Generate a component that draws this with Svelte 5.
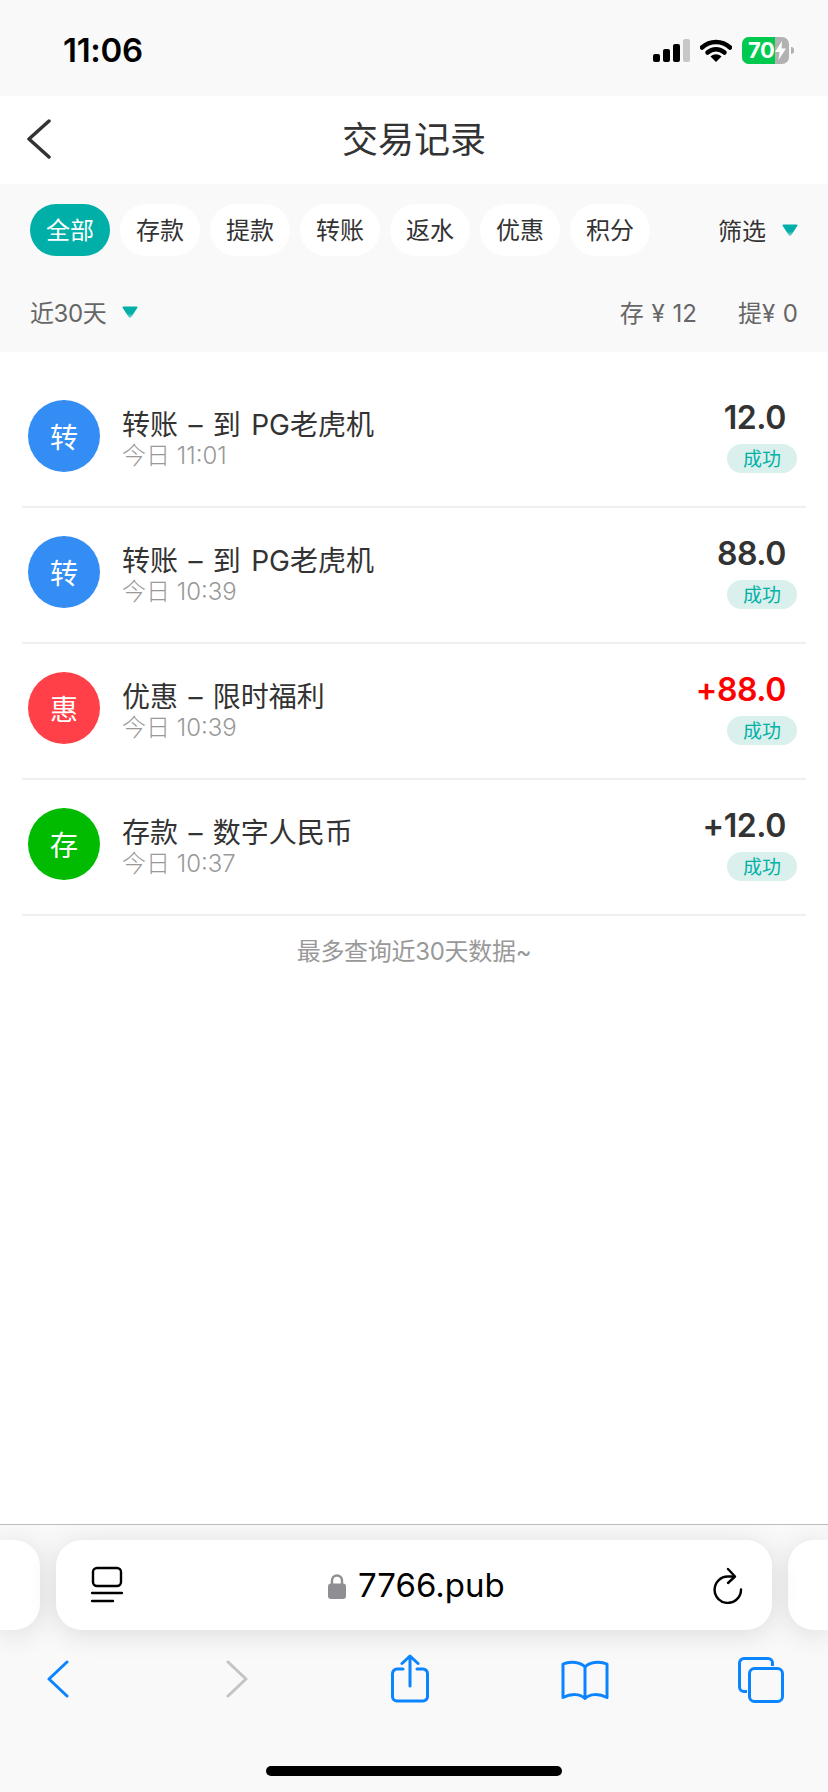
<script>
  const tabs = ['全部', '存款', '提款', '转账', '返水', '优惠', '积分'];
  const rows = [
    { mark: '转', tone: 'blue', title: '转账 – 到 PG老虎机', time: '今日 11:01', amount: '12.0', red: false },
    { mark: '转', tone: 'blue', title: '转账 – 到 PG老虎机', time: '今日 10:39', amount: '88.0', red: false },
    { mark: '惠', tone: 'red', title: '优惠 – 限时福利', time: '今日 10:39', amount: '+88.0', red: true },
    { mark: '存', tone: 'green', title: '存款 – 数字人民币', time: '今日 10:37', amount: '+12.0', red: false }
  ];
</script>

{#snippet tri()}
  <svg class="tri" width="16" height="12" viewBox="0 0 16 12">
    <defs>
      <linearGradient id="tri-fade" x1="0" y1="0" x2="0" y2="1">
        <stop offset="0" stop-color="#00b0a8" />
        <stop offset="0.6" stop-color="#00b0a8" />
        <stop offset="1" stop-color="#7fd6d1" />
      </linearGradient>
    </defs>
    <path d="M1.500 0.500H14.500Q16 0.500 15.200 2L9.200 11.200Q8 12.500 6.800 11.200L0.800 2Q0 0.500 1.500 0.500Z" fill="url(#tri-fade)" />
  </svg>
{/snippet}

<div class="page">
  <div class="status">
    <span class="clock">11:06</span>
    <div class="status-icons">
      <svg class="signal" width="37" height="23" viewBox="0 0 37 23">
        <rect x="0" y="15" width="7" height="8" rx="2" fill="#000" />
        <rect x="10" y="10" width="7" height="13" rx="2" fill="#000" />
        <rect x="20" y="5" width="7" height="18" rx="2" fill="#000" />
        <rect x="30" y="0" width="7" height="23" rx="2" fill="#c8c8c8" />
      </svg>
      <svg class="wifi" width="32" height="23" viewBox="0 0 32 23">
        <path d="M2 8.500C10 1 22 1 30 8.500" fill="none" stroke="#000" stroke-width="4.500" stroke-linecap="round" />
        <path d="M7.500 13.500C12.500 9 19.500 9 24.500 13.500" fill="none" stroke="#000" stroke-width="4.500" stroke-linecap="round" />
        <path d="M10.500 17.500C14 14.600 18 14.600 21.500 17.500L16 23Z" fill="#000" />
      </svg>
      <div class="battery">
        <span class="battery-fill"></span>
        <span class="battery-text">70</span>
        <svg class="bolt" width="11" height="19" viewBox="0 0 11 19"><path d="M7 0L0 11H4.500L3.500 19L11 7.500H6.500Z" fill="#fff" /></svg>
      </div>
      <span class="nub"></span>
    </div>
  </div>

  <header class="nav">
    <svg class="back" width="26" height="40" viewBox="0 0 26 40">
      <path d="M23 2L3 20L23 38" fill="none" stroke="#333" stroke-width="3.500" stroke-linecap="round" stroke-linejoin="round" />
    </svg>
    <h1>交易记录</h1>
  </header>

  <section class="filters">
    <div class="tab-row">
      <div class="tabs">
        {#each tabs as tab, i}
          <span class="tab" class:active={i === 0}><span class="lift">{tab}</span></span>
        {/each}
      </div>
      <span class="picker picker-strong"><span class="lift">筛选</span>{@render tri()}</span>
    </div>
    <div class="sum-row">
      <span class="picker"><span class="lift tight">近30天</span>{@render tri()}</span>
      <div class="sums">
        <span class="lift">存 ¥ 12</span>
        <span class="lift">提¥ 0</span>
      </div>
    </div>
  </section>

  <main class="list">
    {#each rows as row}
      <article class="row">
        <span class="mark {row.tone}">{row.mark}</span>
        <div class="info">
          <div class="title">{row.title}</div>
          <div class="time">{row.time}</div>
        </div>
        <div class="money">
          <div class="amount" class:loss={row.red}>{row.amount}</div>
          <span class="badge"><span class="lift">成功</span></span>
        </div>
      </article>
    {/each}
    <p class="note">最多查询近30天数据~</p>
  </main>

  <footer class="toolbar">
    <div class="url-row">
      <div class="side left"></div>
      <div class="url">
        <svg class="tabs-icon" width="32" height="38" viewBox="0 0 32 38">
          <rect x="2" y="2" width="28" height="18" rx="4" fill="none" stroke="#000" stroke-width="2.400" />
          <path d="M1 27H31M1 35H22" stroke="#000" stroke-width="2.400" stroke-linecap="round" />
        </svg>
        <div class="address">
          <svg width="18" height="26" viewBox="0 0 18 26">
            <path d="M4 12V7.500a5 5 0 0 1 10 0V12" fill="none" stroke="#8e8e93" stroke-width="2.400" />
            <rect x="0" y="10.500" width="18" height="15.500" rx="3" fill="#8e8e93" />
          </svg>
          <span>7766.pub</span>
        </div>
        <svg class="reload" width="30" height="37" viewBox="0 0 30 37">
          <path d="M28 22.500A13.200 13.200 0 1 1 15 9.500H20" fill="none" stroke="#000" stroke-width="2.400" stroke-linecap="round" />
          <path d="M15 2L22 9.500L15 16" fill="none" stroke="#000" stroke-width="2.400" stroke-linecap="round" stroke-linejoin="round" />
        </svg>
      </div>
      <div class="side right"></div>
    </div>
    <nav class="actions">
      <svg width="22" height="38" viewBox="0 0 22 38" class="a-back"><path d="M20 2L2 19L20 36" fill="none" stroke="#0a84ff" stroke-width="3" stroke-linecap="round" stroke-linejoin="round" /></svg>
      <svg width="22" height="38" viewBox="0 0 22 38" class="a-forward"><path d="M2 2L20 19L2 36" fill="none" stroke="#c4c4c4" stroke-width="3" stroke-linecap="round" stroke-linejoin="round" /></svg>
      <svg width="38" height="49" viewBox="0 0 38 49" class="a-share">
        <path d="M12 15H6a4.500 4.500 0 0 0-4.500 4.500v23A4.500 4.500 0 0 0 6 47h26a4.500 4.500 0 0 0 4.500-4.500v-23A4.500 4.500 0 0 0 32 15h-6" fill="none" stroke="#0a84ff" stroke-width="3" stroke-linecap="round" />
        <path d="M19 32V2M11 9.500L19 2L27 9.500" fill="none" stroke="#0a84ff" stroke-width="3" stroke-linecap="round" stroke-linejoin="round" />
      </svg>
      <svg width="48" height="40" viewBox="0 0 48 40" class="a-book">
        <path d="M24 7C20 2.500 10 0.500 2 4V37.500C10 33.500 19 33.500 24 38.500C29 33.500 38 33.500 46 37.500V4C38 0.500 28 2.500 24 7ZM24 7V37" fill="none" stroke="#0a84ff" stroke-width="3" stroke-linecap="round" stroke-linejoin="round" />
      </svg>
      <svg width="46" height="46" viewBox="0 0 46 46" class="a-tabs">
        <path d="M9 34.500H6a4.500 4.500 0 0 1-4.500-4.500V6A4.500 4.500 0 0 1 6 1.500h24A4.500 4.500 0 0 1 34.500 6v3" fill="none" stroke="#0a84ff" stroke-width="3" />
        <rect x="11.500" y="11.500" width="33" height="33" rx="5" fill="none" stroke="#0a84ff" stroke-width="3" />
      </svg>
    </nav>
    <div class="home"></div>
  </footer>
</div>

<style>
  :global(body) {
    margin: 0;
    background: #fff;
  }

  .page {
    width: 828px;
    height: 1792px;
    display: flex;
    flex-direction: column;
    overflow: hidden;
    font-family: Inter, "Noto Sans CJK SC", "Liberation Sans", sans-serif;
    color: #333;
  }

  .lift {
    display: block;
    margin-top: -4px;
  }

  .tight {
    letter-spacing: -0.4px;
  }

  .status {
    height: 96px;
    flex: none;
    background: #f9f9f9;
    display: flex;
    justify-content: space-between;
    align-items: center;
    padding: 0 34px 0 63px;
    box-sizing: border-box;
  }

  .clock {
    font-size: 33px;
    font-weight: 600;
    color: #000;
    line-height: 1;
    margin-top: 4px;
    letter-spacing: -0.3px;
  }

  .status-icons {
    display: flex;
    align-items: center;
    margin-top: 4px;
  }

  .wifi {
    margin-left: 10px;
  }

  .battery {
    position: relative;
    width: 47px;
    height: 27px;
    margin-left: 10px;
    border-radius: 7px;
    background: #b2b2b2;
    overflow: hidden;
    display: flex;
    align-items: center;
  }

  .battery-fill {
    position: absolute;
    left: 0;
    top: 0;
    bottom: 0;
    width: 33px;
    background: #00c94f;
  }

  .battery-text {
    position: relative;
    margin-left: 6px;
    width: 27px;
    flex: none;
    font-size: 22px;
    line-height: 27px;
    font-weight: 700;
    color: #fff;
    letter-spacing: -0.5px;
  }

  .bolt {
    position: relative;
    flex: none;
  }

  .nub {
    width: 3px;
    height: 7px;
    margin-left: 2px;
    border-radius: 0 3px 3px 0;
    background: #b2b2b2;
  }

  .nav {
    height: 88px;
    flex: none;
    background: #fff;
    position: relative;
    display: flex;
    align-items: center;
    justify-content: center;
  }

  .nav h1 {
    margin: 0;
    font-size: 36px;
    font-weight: 400;
    line-height: 1;
    color: #333;
  }

  .back {
    position: absolute;
    left: 26px;
    top: 23px;
  }

  .filters {
    height: 168px;
    flex: none;
    box-sizing: border-box;
    background: #f9f9f9;
    padding: 20px 30px 0;
  }

  .tab-row,
  .sum-row {
    display: flex;
    align-items: center;
    justify-content: space-between;
  }

  .tab-row {
    height: 52px;
  }

  .sum-row {
    height: 36px;
    margin-top: 39px;
  }

  .tabs {
    display: flex;
    gap: 10px;
  }

  .tab {
    width: 80px;
    height: 52px;
    border-radius: 26px;
    background: #fff;
    display: flex;
    align-items: center;
    justify-content: center;
    font-size: 24px;
    color: #333;
  }

  .tab.active {
    background: #00b0a8;
    color: #fff;
  }

  .picker {
    display: flex;
    align-items: center;
    font-size: 24px;
    color: #666;
  }

  .picker-strong {
    color: #333;
    margin-top: 2px;
  }

  .tri {
    margin-left: 16px;
    margin-top: -2px;
  }

  .sums {
    display: flex;
    gap: 41px;
    font-size: 24px;
    color: #666;
    word-spacing: 1px;
  }

  .list {
    flex: 1;
    background: #fff;
    padding: 20px 22px 0;
  }

  .row {
    height: 136px;
    box-sizing: border-box;
    padding: 28px 9px 0 6px;
    border-bottom: 2px solid #f0f0f0;
    display: flex;
    align-items: flex-start;
  }

  .mark {
    width: 72px;
    height: 72px;
    flex: none;
    border-radius: 50%;
    display: flex;
    align-items: center;
    justify-content: center;
    font-size: 28px;
    color: #fff;
  }

  .blue {
    background: #338df5;
  }

  .red {
    background: #ff4048;
  }

  .green {
    background: #00bb00;
  }

  .info {
    flex: 1;
    margin-left: 22px;
  }

  .title {
    font-size: 28px;
    line-height: 36px;
    margin-top: 7px;
    word-spacing: 2.5px;
    color: #333;
  }

  .time {
    font-size: 24px;
    line-height: 28px;
    margin-top: -1px;
    font-weight: 300;
    color: #999;
  }

  .money {
    display: flex;
    flex-direction: column;
    align-items: flex-end;
  }

  .amount {
    font-size: 32px;
    line-height: 36px;
    margin-right: 11px;
    font-weight: 600;
    letter-spacing: -0.4px;
    color: #333;
  }

  .amount.loss {
    color: #f00;
  }

  .badge {
    width: 70px;
    height: 29px;
    margin-top: 8px;
    border-radius: 15px;
    background: #d9f0ec;
    color: #00b0a8;
    font-size: 19px;
    display: flex;
    align-items: center;
    justify-content: center;
  }

  .badge .lift {
    margin-top: -3px;
  }

  .note {
    margin: 18px 0 0;
    text-align: center;
    font-size: 24px;
    line-height: 36px;
    letter-spacing: -0.3px;
    color: #999;
  }

  .toolbar {
    height: 268px;
    flex: none;
    box-sizing: border-box;
    background: #f9f9f9;
    border-top: 1px solid #bdbdbd;
    padding-top: 15px;
    position: relative;
  }

  .url-row {
    display: flex;
    gap: 16px;
    height: 90px;
  }

  .side,
  .url {
    background: #fff;
    box-shadow: 0 4px 28px rgba(0, 0, 0, 0.12);
  }

  .side {
    flex: 0 0 40px;
  }

  .side.left {
    border-radius: 0 26px 26px 0;
  }

  .side.right {
    border-radius: 26px 0 0 26px;
  }

  .url {
    flex: 1;
    border-radius: 26px;
    position: relative;
    display: flex;
    align-items: center;
    justify-content: space-between;
    padding: 0 29px 0 35px;
  }

  .tabs-icon {
    margin-top: -1px;
  }

  .address {
    position: absolute;
    left: 272px;
    top: 0;
    height: 90px;
    display: flex;
    align-items: center;
    gap: 12px;
    font-size: 33px;
    color: #000;
    font-family: Inter, "Liberation Sans", sans-serif;
  }

  .address svg {
    margin-top: 1px;
  }

  .reload {
    margin-top: 1px;
  }

  .actions {
    display: flex;
    position: relative;
    height: 60px;
    margin-top: 24px;
    align-items: center;
  }

  .actions svg {
    position: absolute;
  }

  .a-back {
    left: 47px;
    top: 6px;
  }

  .a-forward {
    left: 226px;
    top: 6px;
  }

  .a-share {
    left: 391px;
    top: 0;
  }

  .a-book {
    left: 561px;
    top: 6px;
  }

  .a-tabs {
    left: 738px;
    top: 3px;
  }

  .home {
    position: absolute;
    left: 266px;
    bottom: 16px;
    width: 296px;
    height: 10px;
    border-radius: 5px;
    background: #000;
  }
</style>
